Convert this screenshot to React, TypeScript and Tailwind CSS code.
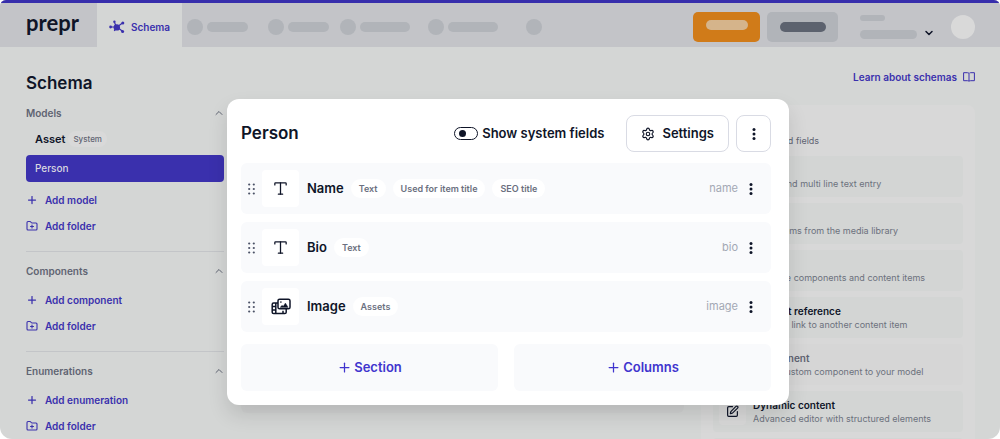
import type { ReactNode } from 'react'
import { ChevronDown, ChevronUp, FolderPlus, Plus, Settings, SquarePen, Type } from 'lucide-react'
import { clsx } from 'clsx'

type Field = {
  label: string
  apiId: string
  tags: string[]
  icon: 'text' | 'assets'
}

type FieldType = {
  title: string
  description: string
  muted?: boolean
}

const FIELDS: Field[] = [
  { label: 'Name', apiId: 'name', tags: ['Text', 'Used for item title', 'SEO title'], icon: 'text' },
  { label: 'Bio', apiId: 'bio', tags: ['Text'], icon: 'text' },
  { label: 'Image', apiId: 'image', tags: ['Assets'], icon: 'assets' },
]

const FIELD_TYPES: FieldType[] = [
  { title: 'Text', description: 'Single and multi line text entry' },
  { title: 'Assets', description: 'Place items from the media library' },
  { title: 'Stack', description: 'Combine components and content items' },
  { title: 'Content reference', description: 'Create a link to another content item' },
  { title: 'Component', description: 'Add a custom component to your model', muted: true },
  { title: 'Dynamic content', description: 'Advanced editor with structured elements' },
]

function SchemaIcon() {
  return (
    <svg width="16" height="14" viewBox="0 0 16 14" fill="currentColor" aria-hidden>
      <path
        d="M2 7h5M7.5 7 5.5 2.5M8 7l5.5-4M8 7l5.5 4.2M5.2 11 8 7"
        stroke="currentColor"
        strokeWidth="1.2"
      />
      <circle cx="7.8" cy="7.4" r="3.2" />
      <circle cx="1.6" cy="7" r="1.4" />
      <circle cx="5.4" cy="1.8" r="1.2" />
      <circle cx="13.8" cy="2.9" r="1.5" />
      <circle cx="13.6" cy="11.6" r="1.5" />
    </svg>
  )
}

function BookIcon() {
  return (
    <svg width="12" height="12" viewBox="0 0 12 12" fill="none" stroke="currentColor" strokeLinejoin="round" aria-hidden>
      <path d="M6 2.500C5.700 2 5.200 1.700 4.500 1.700H.6v8h3.900c.7 0 1.200.2 1.500.6.300-.4.800-.6 1.500-.6h3.900v-8H7.500C6.800 1.700 6.300 2 6 2.500v7.800" />
    </svg>
  )
}

function AssetsIcon() {
  return (
    <svg width="20" height="17" viewBox="0 0 20 17" fill="none" stroke="currentColor" strokeWidth="1.5" strokeLinejoin="round" aria-hidden>
      <rect x="7" y="1.2" width="12" height="9.6" rx="1.6" />
      <path d="M7 5H2.600A1.400 1.400 0 0 0 1.200 6.400v7.800a1.400 1.400 0 0 0 1.400 1.400h11.200a1.400 1.400 0 0 0 1.400-1.400V11M4.800 5v10.600M1.200 8.600h3.600M1.200 12h3.600M12 12.800v2.800" />
      <path d="M9 9.400 11 7.200l1.200 1 2.200-3.200 2.900 4.400z" fill="currentColor" strokeWidth="0.3" />
      <circle cx="9.9" cy="4.1" r="0.8" fill="currentColor" stroke="none" />
    </svg>
  )
}

function Kebab() {
  return (
    <svg width="4" height="12" viewBox="0 0 4 12" fill="currentColor" aria-hidden>
      <circle cx="2" cy="1.6" r="1.5" />
      <circle cx="2" cy="6" r="1.5" />
      <circle cx="2" cy="10.4" r="1.5" />
    </svg>
  )
}

function Grip() {
  return (
    <svg width="7" height="12" viewBox="0 0 7 12" className="text-[#4b5166]" fill="currentColor" aria-hidden>
      {[1.5, 6, 10.5].map((y) => (
        <g key={y}>
          <circle cx="1.2" cy={y} r="1.1" />
          <circle cx="5.8" cy={y} r="1.1" />
        </g>
      ))}
    </svg>
  )
}

function NavPlaceholder({ wide }: { wide?: boolean }) {
  return (
    <div className="flex items-center gap-1">
      <span className="size-4 rounded-full bg-[#b1b4b9]" />
      <span className={clsx('h-[10px] rounded-full bg-[#b1b4b9]', wide ? 'w-[50px]' : 'w-[41px]')} />
    </div>
  )
}

function TopBar() {
  return (
    <header className="flex h-[47px] shrink-0 items-center border-t-3 border-[#372eac] bg-[#c3c4c8]">
      <a href="#" className="mb-1 ml-[26px] w-[71px] font-['Lato'] text-[22px] leading-6 font-bold text-[#0f1528]">
        prepr
      </a>
      <a
        href="#"
        aria-current="page"
        className="flex h-full items-center gap-[6px] bg-[#d4d6d5] px-3 pt-1 text-[10px] font-semibold text-[#3a30ad]"
      >
        <SchemaIcon />
        Schema
      </a>
      <nav aria-label="Sections" className="ml-[5px] flex items-center pt-1">
        <div className="flex gap-5">
          <NavPlaceholder />
          <NavPlaceholder />
        </div>
        <div className="ml-[11px] flex gap-[18px]">
          <NavPlaceholder wide />
          <NavPlaceholder wide />
        </div>
        <span className="ml-7 size-4 rounded-full bg-[#b1b4b9]" />
      </nav>
      <div className="ml-auto flex items-center pr-[25px] pt-1">
        <button aria-label="Create" className="grid h-[30px] w-[67px] place-items-center rounded-[5px] bg-[#d07b19]">
          <span className="mb-1 h-[10px] w-[42px] rounded-full bg-[#d5b48b]" />
        </button>
        <button aria-label="Preview" className="ml-[7px] grid h-[30px] w-[71px] place-items-center rounded-[5px] bg-[#b1b4b9]">
          <span className="h-[10px] w-[46px] rounded-full bg-[#5c626e]" />
        </button>
        <button aria-label="Environment" className="ml-[22px] flex items-end gap-[6px] text-[#0f1528]">
          <span className="flex flex-col gap-[9px]">
            <span className="h-[6px] w-[25px] rounded-full bg-[#b1b4b9]" />
            <span className="h-[9px] w-[57px] rounded-full bg-[#b1b4b9]" />
          </span>
          <ChevronDown size={12} strokeWidth={3} />
        </button>
        <span className="ml-4 size-6 rounded-full bg-[#d9d9d9]" />
      </div>
    </header>
  )
}

function SidebarSection({ title, action, children }: { title: string; action: string; children?: ReactNode }) {
  return (
    <section className="border-b border-[#c3c5c8] pt-[11px] pb-3">
      <button className="flex h-4 w-full items-center justify-between text-[10px] font-semibold text-[#5f6472]">
        {title}
        <ChevronUp size={12} strokeWidth={2} className="-mr-px" />
      </button>
      {children ?? <div className="h-2" />}
      <button className="flex h-[26px] items-center gap-[7px] text-[10px] font-semibold text-[#3a30ad]">
        <Plus size={12} strokeWidth={2.5} />
        {action}
      </button>
      <button className="flex h-[26px] items-center gap-[7px] text-[10px] font-semibold text-[#3a30ad]">
        <FolderPlus size={12} strokeWidth={2.2} />
        Add folder
      </button>
    </section>
  )
}

function Sidebar() {
  return (
    <aside className="w-[198px] shrink-0">
      <h1 className="mt-[26px] text-[17px] leading-[21px] font-semibold text-[#0f1528]">Schema</h1>
      <SidebarSection title="Models" action="Add model">
        <div className="flex flex-col gap-[3px] py-[5px]">
          <a href="#" className="flex h-[26px] items-center gap-[3px] px-[9px] text-[11px] font-semibold text-[#0f1528]">
            Asset
            <span className="rounded-full bg-[#d9d9d9] px-[5px] text-[8px] leading-4 font-medium text-[#5f6472]">System</span>
          </a>
          <a href="#" className="flex h-[27px] items-center rounded bg-[#3a30ad] px-[9px] text-[10px] font-medium text-[#d9d9e0]">
            Person
          </a>
        </div>
      </SidebarSection>
      <SidebarSection title="Components" action="Add component" />
      <SidebarSection title="Enumerations" action="Add enumeration" />
    </aside>
  )
}

function FieldTypePanel() {
  return (
    <aside className="flex w-[274px] shrink-0 flex-col">
      <a href="#" className="mt-[22px] flex h-4 items-center gap-[6px] self-end text-[10px] font-semibold text-[#3a30ad]">
        Learn about schemas
        <BookIcon />
      </a>
      <div className="mt-5 rounded-lg bg-[#d8d8d8] px-3 pt-[15px]">
        <h2 className="text-xs leading-[14px] font-semibold text-[#0f1528]">Add field</h2>
        <p className="text-[9px] leading-[14px] text-[#5f6472]">Drag &amp; drop to add fields</p>
        <ul className="mt-2 flex flex-col gap-[6px]">
          {FIELD_TYPES.map(({ title, description, muted }) => (
            <li
              key={title}
              className={clsx(
                'flex h-[41px] items-center gap-[7px] rounded px-[6px]',
                muted ? 'bg-[#d6d6d6]' : 'bg-[#d3d5d4]',
              )}
            >
              <span className="grid size-[27px] place-items-center rounded-sm bg-[#d8d8d8] text-[#0f1528]">
                <SquarePen size={13} strokeWidth={2.2} />
              </span>
              <div>
                <p className={clsx('text-[10px] leading-[14px] font-semibold', muted ? 'text-[#5f6472]' : 'text-[#0f1528]')}>
                  {title}
                </p>
                <p className="text-[9px] leading-[14px] text-[#6c717d]">{description}</p>
              </div>
            </li>
          ))}
          <li className="h-[41px] rounded bg-[#d3d5d4]" />
        </ul>
      </div>
    </aside>
  )
}

function FieldRow({ label, apiId, tags, icon }: Field) {
  return (
    <li className="flex h-[51px] items-center rounded-md bg-[#f9fafc] pr-[18px] pl-[7px]">
      <Grip />
      <span className="ml-[7px] grid size-[37px] place-items-center rounded bg-white text-[#0f1528]">
        {icon === 'text' ? <Type size={17} strokeWidth={1.8} /> : <AssetsIcon />}
      </span>
      <span className="ml-2 text-[13px] font-semibold text-[#0f1528]">{label}</span>
      <span className="ml-[7px] flex gap-[7px]">
        {tags.map((tag) => (
          <span key={tag} className="rounded-full bg-white px-2 text-[9px] leading-[19px] font-semibold text-[#6b7080]">
            {tag}
          </span>
        ))}
      </span>
      <span className="ml-auto text-[11px] text-[#a3a8b4]">{apiId}</span>
      <button aria-label={`${label} options`} className="ml-[11px] text-[#0f1528]">
        <Kebab />
      </button>
    </li>
  )
}

function AddButton({ children }: { children: ReactNode }) {
  return (
    <button className="flex h-[47px] items-center justify-center gap-[2px] rounded-md bg-[#f9fafc] text-[13px] font-semibold text-[#4034ce]">
      <Plus size={15} strokeWidth={2} />
      {children}
    </button>
  )
}

function ModelEditor() {
  return (
    <section
      aria-label="Person model"
      className="absolute top-[99px] right-[211px] left-[227px] rounded-xl bg-white pt-4 pr-[18px] pb-[14px] pl-[14px] shadow-[0_10px_20px_rgba(0,0,0,0.12)]"
    >
      <div className="flex h-[37px] items-center text-[#0f1528]">
        <h2 className="text-[17px] font-semibold">Person</h2>
        <label className="ml-auto flex items-center gap-1 text-[13px] font-semibold">
          <input
            type="checkbox"
            className="flex h-[13px] w-6 appearance-none items-center rounded-full border border-[#0f1528] px-1 before:size-[7px] before:rounded-full before:bg-[#0f1528] checked:justify-end"
          />
          Show system fields
        </label>
        <button className="ml-[22px] flex h-full items-center gap-[7px] rounded-lg border border-[#d9dbe4] px-[14px] text-[13px] font-semibold">
          <Settings size={14} strokeWidth={2} />
          Settings
        </button>
        <button aria-label="Model options" className="ml-[7px] grid h-full w-[35px] place-items-center rounded-lg border border-[#d9dbe4]">
          <Kebab />
        </button>
      </div>
      <ul className="mt-[11px] flex flex-col gap-2">
        {FIELDS.map((field) => (
          <FieldRow key={field.apiId} {...field} />
        ))}
      </ul>
      <div className="mt-3 grid grid-cols-2 gap-4">
        <AddButton>Section</AddButton>
        <AddButton>Columns</AddButton>
      </div>
    </section>
  )
}

export default function App() {
  return (
    <div className="bg-white font-['Inter',sans-serif]">
      <div className="relative flex h-screen flex-col overflow-hidden rounded-t-md rounded-b-xl bg-[#d4d6d5]">
        <TopBar />
        <main className="flex min-h-0 flex-1 items-start gap-[17px] pr-[25px] pl-[26px]">
          <Sidebar />
          <div className="mt-[62px] h-[304px] flex-1 rounded-md bg-[#d0d1d1]" />
          <FieldTypePanel />
        </main>
        <ModelEditor />
      </div>
    </div>
  )
}
